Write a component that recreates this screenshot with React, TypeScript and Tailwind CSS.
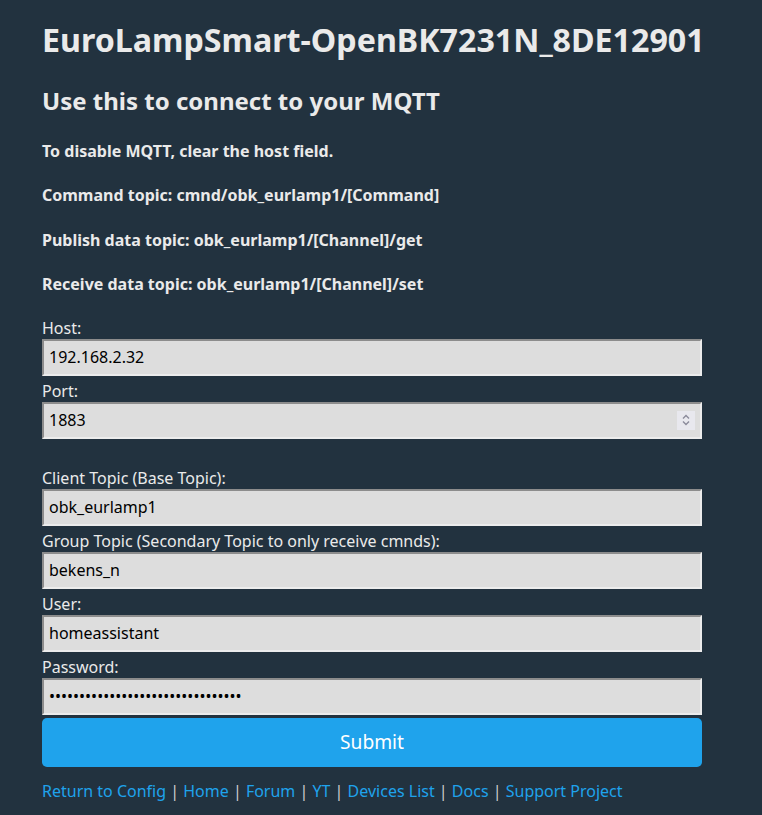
export default function App() {
  const field =
    "block w-full h-[37px] px-[5px] text-[16px] text-black bg-[#dddddd] border-2 border-t-[#8c8c8c] border-l-[#8c8c8c] border-r-[#ececec] border-b-[#ececec] outline-none";
  const label = "block text-[16px] leading-[22px]";

  const links = ["Return to Config", "Home", "Forum", "YT", "Devices List", "Docs", "Support Project"];

  return (
    <div className="min-h-screen bg-[#22323f] text-[#eaeaea] font-['Noto_Sans',sans-serif]">
      <div className="ml-[42px] w-[660px] pt-[18px] pb-[10px]">
        <h1 className="text-[32.2px] font-bold leading-[44px] whitespace-nowrap">EuroLampSmart-OpenBK7231N_8DE12901</h1>
        <h2 className="mt-[23px] text-[24px] font-bold leading-[32px]">Use this to connect to your MQTT</h2>

        <div className="mt-[23px] flex flex-col gap-[22.3px] text-[16px] font-bold leading-[22px]">
          <p>To disable MQTT, clear the host field.</p>
          <p>Command topic: cmnd/obk_eurlamp1/[Command]</p>
          <p>Publish data topic: obk_eurlamp1/[Channel]/get</p>
          <p>Receive data topic: obk_eurlamp1/[Channel]/set</p>
        </div>

        <form className="mt-[22px]" onSubmit={(e) => e.preventDefault()}>
          <label className={label}>Host:</label>
          <input className={field} type="text" defaultValue="192.168.2.32" />
          <label className={`${label} mt-[4px]`}>Port:</label>
          <div className="relative">
            <input className={field} type="text" inputMode="numeric" defaultValue="1883" />
            {/* spin buttons */}
            <div className="absolute right-[7px] top-[9px] w-[18px] h-[19px] bg-[#e8e8ee] flex flex-col items-center justify-center">
              <svg width="10" height="14" viewBox="0 0 10 14" fill="none" stroke="#8b8b9b" strokeWidth="1.4">
                <path d="M2 5.5 L5 2.5 L8 5.5" />
                <path d="M2 8.5 L5 11.5 L8 8.5" />
              </svg>
            </div>
          </div>

          <label className={`${label} mt-[28px]`}>Client Topic (Base Topic):</label>
          <input className={field} type="text" defaultValue="obk_eurlamp1" />
          <label className={`${label} mt-[4px]`}>Group Topic (Secondary Topic to only receive cmnds):</label>
          <input className={field} type="text" defaultValue="bekens_n" />
          <label className={`${label} mt-[4px]`}>User:</label>
          <input className={field} type="text" defaultValue="homeassistant" />
          <label className={`${label} mt-[4px]`}>Password:</label>
          <input className={field} type="password" defaultValue="01234567890123456789012345678901" />

          <button
            type="submit"
            className="mt-[3px] block w-full h-[49px] rounded-[5px] bg-[#1fa3ec] text-white text-[19.2px] cursor-pointer"
          >
            Submit
          </button>
        </form>

        <div className="mt-[13px] text-[16px] leading-[22px]">
          {links.map((l, i) => (
            <span key={l}>
              {i > 0 && <span className="text-[#cfcfcf]"> | </span>}
              <a href="#" className="text-[#1fa3ec]">{l}</a>
            </span>
          ))}
        </div>
      </div>
    </div>
  );
}
